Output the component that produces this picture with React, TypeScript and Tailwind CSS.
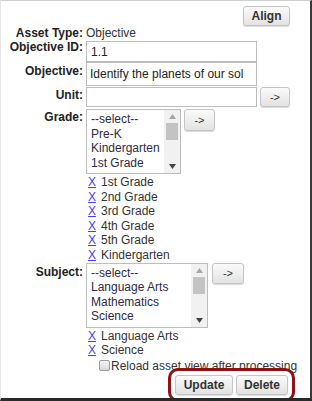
import React from "react";

const Btn = ({ children, className = "" }: { children: React.ReactNode; className?: string }) => (
  <button
    className={
      "flex items-center justify-center rounded-[3px] border border-[#c4c4c4] bg-gradient-to-b from-[#fbfbfb] to-[#e2e2e2] text-[12px] font-bold text-[#333] shadow-[0_1px_1px_rgba(0,0,0,0.15)] " +
      className
    }
  >
    {children}
  </button>
);

const Arrow = ({ className = "" }: { className?: string }) => (
  <Btn className={"font-normal " + className}>
    <span className="text-[11px] leading-none">-&gt;</span>
  </Btn>
);

const ListBox = ({ items, width }: { items: string[]; width: string }) => (
  <div className={"flex border border-[#bdbdbd] bg-white " + width}>
    <div className="flex-1 pl-[4px] pt-[2px] text-[12px] leading-[14.5px] text-[#2f2a45]">
      {items.map((i) => (
        <div key={i} className="whitespace-nowrap">
          {i}
        </div>
      ))}
    </div>
    <div className="flex w-[16px] flex-col items-center bg-[#f1f1f1] py-[4px]">
      <svg width="7" height="5" viewBox="0 0 7 5">
        <path d="M0 5 L3.5 0 L7 5 Z" fill="#a5a5a5" />
      </svg>
      <div className="mt-[4px] h-[17px] w-[12px] bg-[#c3c3c3]" />
      <div className="flex-1" />
      <svg width="7" height="5" viewBox="0 0 7 5">
        <path d="M0 0 L3.5 5 L7 0 Z" fill="#444" />
      </svg>
    </div>
  </div>
);

const Picked = ({ items }: { items: string[] }) => (
  <div className="mt-[1px] text-[12px] leading-[14.6px] text-[#333]">
    {items.map((i) => (
      <div key={i} className="flex">
        <span className="w-[15px] pl-[2px] text-[#3d3dff] underline">X</span>
        <span>{i}</span>
      </div>
    ))}
  </div>
);

const Label = ({ children, className = "" }: { children: React.ReactNode; className?: string }) => (
  <div className={"w-[82px] shrink-0 text-right text-[12px] font-bold leading-[14px] text-[#222] " + className}>
    {children}
  </div>
);

export default function App() {
  return (
    <div
      className="relative h-[401px] w-[312px] overflow-hidden border-t border-l border-t-[#cfcfcf] border-l-[#e6e6e6] border-r-2 border-b-[3px] border-r-[#3a3a3a] border-b-[#2a2a2a] bg-white"
      style={{ fontFamily: '"Liberation Sans", Arial, sans-serif' }}
    >
      <div className="flex justify-end pr-[20px] pt-[5px]">
        <Btn className="h-[20px] w-[47px]">Align</Btn>
      </div>

      <div className="flex h-[14px]">
        <Label>Asset Type:</Label>
        <div className="pl-[3px] text-[12px] leading-[14px] text-[#333]">Objective</div>
      </div>

      <div className="flex h-[22px]">
        <Label>Objective ID:</Label>
        <div className="ml-[3px] mt-[1px] flex h-[21px] w-[171px] items-center border border-[#bdbdbd] px-[4px] text-[12px] text-[#222]">
          1.1
        </div>
      </div>

      <div className="flex h-[24px]">
        <Label className="pt-[2px]">Objective:</Label>
        <div className="ml-[3px] flex h-[24px] w-[171px] items-center overflow-hidden whitespace-nowrap border border-[#bdbdbd] px-[3px] text-[12px] text-[#222]">
          Identify the planets of our sol
        </div>
      </div>

      <div className="flex h-[22px]">
        <Label className="pt-[2px]">Unit:</Label>
        <div className="ml-[3px] mt-[1px] h-[20px] w-[171px] border border-[#bdbdbd]" />
        <Arrow className="ml-[3px] mt-[1px] h-[20px] w-[30px]" />
      </div>

      <div className="mt-[1px] flex">
        <Label className="pt-[1px]">Grade:</Label>
        <div className="ml-[3px] flex flex-col">
          <div className="flex items-start">
            <ListBox items={["--select--", "Pre-K", "Kindergarten", "1st Grade"]} width="h-[65px] w-[95px]" />
            <Arrow className="ml-[3px] h-[22px] w-[31px]" />
          </div>
          <Picked items={["1st Grade", "2nd Grade", "3rd Grade", "4th Grade", "5th Grade", "Kindergarten"]} />
        </div>
      </div>

      <div className="flex">
        <Label className="pt-[2px]">Subject:</Label>
        <div className="ml-[3px] flex flex-col">
          <div className="flex items-start">
            <ListBox items={["--select--", "Language Arts", "Mathematics", "Science"]} width="h-[65px] w-[122px]" />
            <Arrow className="ml-[4px] h-[21px] w-[32px]" />
          </div>
          <Picked items={["Language Arts", "Science"]} />
          <div className="mt-[1px] flex items-center pl-[13px] text-[12px] leading-[14px] text-[#333]">
            <span className="mr-[1px] h-[11px] w-[11px] rounded-[2px] border border-[#9a9a9a] bg-gradient-to-b from-[#f4f4f4] to-[#d8d8d8]" />
            <span className="whitespace-nowrap">Reload asset view after processing</span>
          </div>
        </div>
      </div>

      <div className="absolute left-[167px] top-[367px] flex h-[34px] w-[127px] items-center justify-center gap-[3px] rounded-[10px] border-[3px] border-[#8e1212] bg-white">
        <Btn className="h-[20px] w-[58px]">Update</Btn>
        <Btn className="h-[20px] w-[52px]">Delete</Btn>
      </div>
    </div>
  );
}
